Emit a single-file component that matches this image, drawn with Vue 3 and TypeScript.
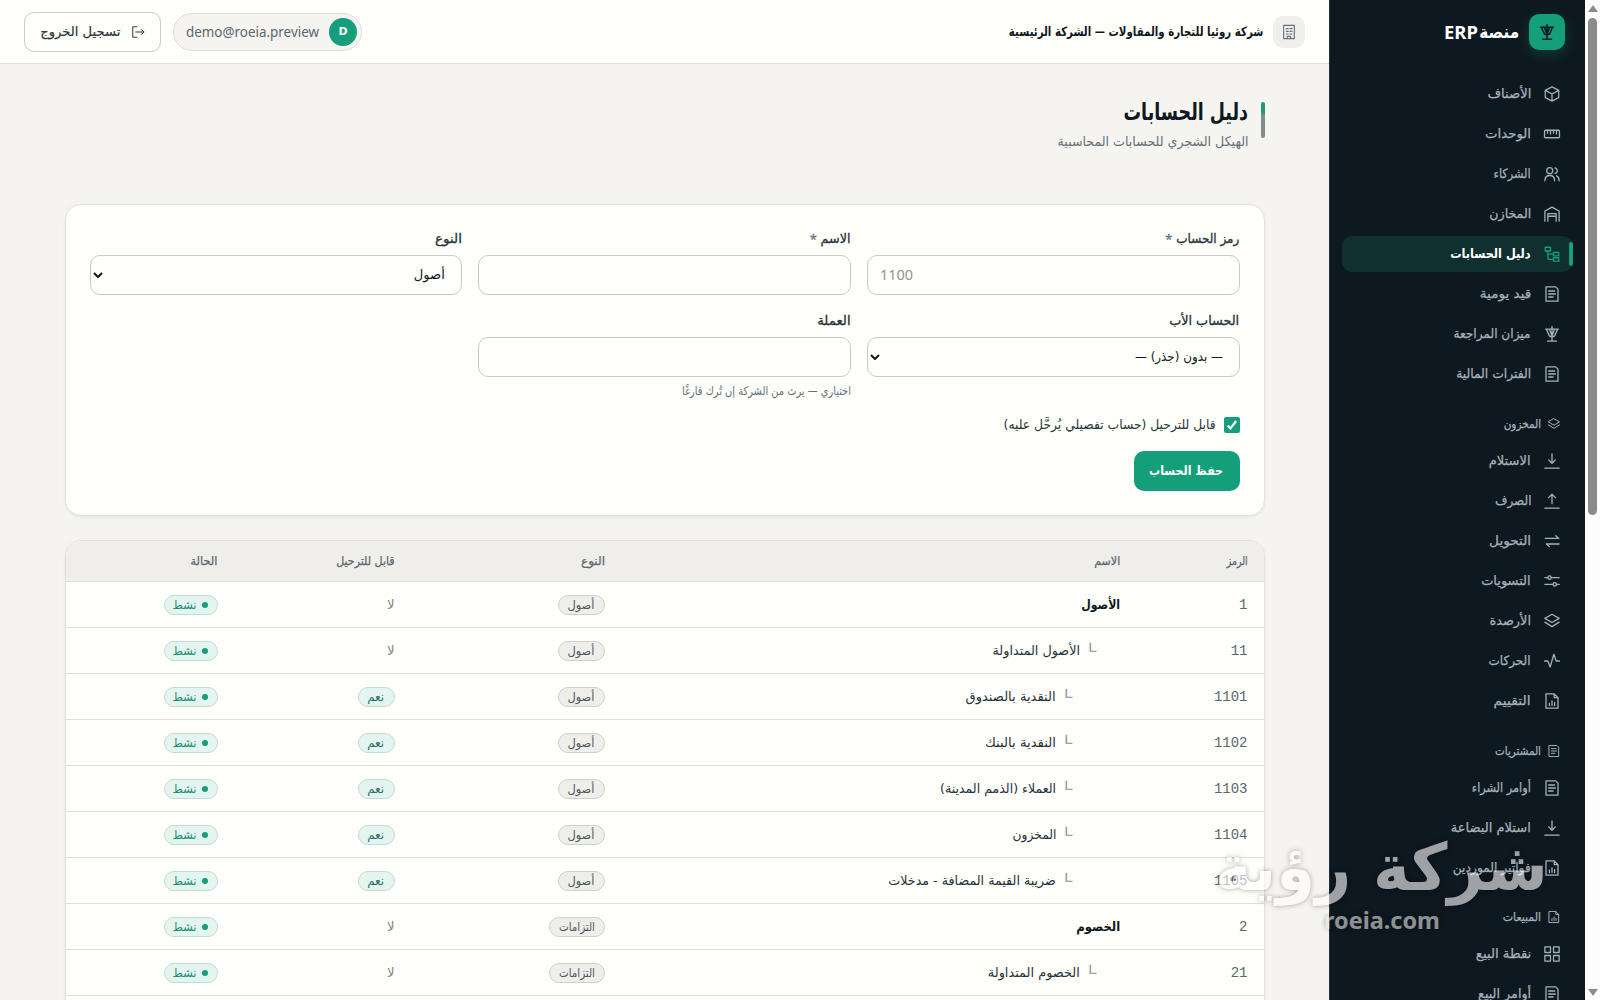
<script setup lang="ts">
import type { Directive } from 'vue'

interface NavItem { label: string; w: number; icon: string; active?: boolean }
interface NavGroup { title?: string; w?: number; icon?: string; items: NavItem[] }
interface Account { code: string; name: string; w: number; level: number; type: string; tw: number; postable: boolean }

// Sets the width of a run of text, so that labels keep their measure in any fallback font.
const vFit: Directive<HTMLElement, number> = {
  mounted(el, { value }) {
    const natural = el.getBoundingClientRect().width
    if (!natural) return
    const ltr = getComputedStyle(el).direction === 'ltr'
    el.style.transformOrigin = ltr ? 'left center' : 'right center'
    el.style.transform = `scaleX(${value / natural})`
    el.style.marginInlineEnd = `${value - natural}px`
  },
}

const icons: Record<string, string> = {
  box: 'M12 2.5l9 4.7v9.6l-9 4.7-9-4.7V7.2zM3 7.2l9 4.8 9-4.8M12 12v9.5',
  ruler: 'M3.5 7h17a1.5 1.5 0 0 1 1.5 1.5v7a1.5 1.5 0 0 1-1.5 1.5h-17A1.5 1.5 0 0 1 2 15.5v-7A1.5 1.5 0 0 1 3.5 7zM6 7v4M10 7v5M14 7v4M18 7v5',
  users: 'M9 3.5a4 4 0 1 1 0 8 4 4 0 0 1 0-8zM2.5 21c0-4.5 2.8-7 6.5-7s6.5 2.5 6.5 7M16 3.8a3.8 3.8 0 0 1 0 7.4M18 14.5c2.3 1 3.5 3.3 3.5 6.5',
  store: 'M2.5 21.5V8L12 2.8 21.5 8v13.5M6.5 21.5V11.5h11v10M6.5 15h11',
  tree: 'M3 3h7v5H3zM14 10h7v4.5h-7zM14 17h7v4.5h-7zM6.5 8v9.5a1.7 1.7 0 0 0 1.7 1.7H14M6.5 12.2H14',
  doc: 'M4 2.5h13l3 3v16H4zM7.5 8h8M7.5 12h9M7.5 16h6',
  scale: 'M12 2v19.5M6 21.5h12M3.5 5.5h17M4.5 5.5l4 9c2 1.5 5 1.5 7 0l4-9M8.5 5.5L12 15l3.5-9.5',
  layers: 'M12 3l9.5 5.5L12 14 2.5 8.5zM2.5 13.5L12 19.5l9.5-6',
  down: 'M12 2.5v12M7.5 10.5l4.5 4.5 4.5-4.5M2.5 21.5h19',
  up: 'M12 15.5v-12M7.5 7.5L12 3l4.5 4.5M2.5 21.5h19',
  swap: 'M3 8.5h18M17 5l4 3.5M21.5 16h-17M8.5 19.5l-4-3.5',
  sliders: 'M2.5 7.5h4M11 7.5h10.5M8.7 5.3a2.2 2.2 0 1 1 0 4.4 2.2 2.2 0 0 1 0-4.4M2.5 16.5h11M18 16.5h3.5M15.7 14.3a2.2 2.2 0 1 1 0 4.4 2.2 2.2 0 0 1 0-4.4',
  pulse: 'M2 12h4.500l3 8 5-17 3 9H22',
  report: 'M4 2.5h11l5 5v14H4zM15 2.5v5h5M8.5 18v-3M12 18v-6M15.5 18v-4',
  grid: 'M2.5 2.5h7.5v7.5H2.5zM14 2.5h7.5v7.5H14zM2.5 14h7.5v7.5H2.5zM14 14h7.5v7.5H14z',
  building: 'M4 2h16v20H4zM8 7h3M13.5 7h3M8 11h3M13.5 11h3M8 15h3M13.5 15h3M9.5 22v-3.5h5V22',
  exit: 'M10 3H3v18h7M8 12h14M18 8l4 4-4 4',
}

const nav: NavGroup[] = [
  { items: [
    { label: 'الأصناف', w: 44, icon: 'box' },
    { label: 'الوحدات', w: 46, icon: 'ruler' },
    { label: 'الشركاء', w: 37, icon: 'users' },
    { label: 'المخازن', w: 42, icon: 'store' },
    { label: 'دليل الحسابات', w: 80.5, icon: 'tree', active: true },
    { label: 'قيد يومية', w: 51.5, icon: 'doc' },
    { label: 'ميزان المراجعة', w: 77, icon: 'scale' },
    { label: 'الفترات المالية', w: 75, icon: 'doc' },
  ] },
  { title: 'المخزون', w: 37.5, icon: 'layers', items: [
    { label: 'الاستلام', w: 42, icon: 'down' },
    { label: 'الصرف', w: 36.5, icon: 'up' },
    { label: 'التحويل', w: 42, icon: 'swap' },
    { label: 'التسويات', w: 49.5, icon: 'sliders' },
    { label: 'الأرصدة', w: 41.5, icon: 'layers' },
    { label: 'الحركات', w: 42, icon: 'pulse' },
    { label: 'التقييم', w: 37, icon: 'report' },
  ] },
  { title: 'المشتريات', w: 46, icon: 'doc', items: [
    { label: 'أوامر الشراء', w: 59, icon: 'doc' },
    { label: 'استلام البضاعة', w: 80, icon: 'down' },
    { label: 'فواتير الموردين', w: 78, icon: 'report' },
  ] },
  { title: 'المبيعات', w: 38.5, icon: 'report', items: [
    { label: 'نقطة البيع', w: 55.5, icon: 'grid' },
    { label: 'أوامر البيع', w: 53, icon: 'doc' },
  ] },
]

const accounts: Account[] = [
  { code: '1', name: 'الأصول', w: 39, level: 0, type: 'أصول', tw: 27, postable: false },
  { code: '11', name: 'الأصول المتداولة', w: 87.5, level: 1, type: 'أصول', tw: 27, postable: false },
  { code: '1101', name: 'النقدية بالصندوق', w: 90, level: 2, type: 'أصول', tw: 27, postable: true },
  { code: '1102', name: 'النقدية بالبنك', w: 71, level: 2, type: 'أصول', tw: 27, postable: true },
  { code: '1103', name: 'العملاء (الذمم المدينة)', w: 116, level: 2, type: 'أصول', tw: 27, postable: true },
  { code: '1104', name: 'المخزون', w: 44, level: 2, type: 'أصول', tw: 27, postable: true },
  { code: '1105', name: 'ضريبة القيمة المضافة - مدخلات', w: 167.5, level: 2, type: 'أصول', tw: 27, postable: true },
  { code: '2', name: 'الخصوم', w: 44, level: 0, type: 'التزامات', tw: 36, postable: false },
  { code: '21', name: 'الخصوم المتداولة', w: 92, level: 1, type: 'التزامات', tw: 36, postable: false },
]
</script>

<template>
  <div class="screen" dir="rtl">
    <div class="scrollbar">
      <i class="arrow arrow-up"></i>
      <i class="thumb"></i>
      <i class="arrow arrow-down"></i>
    </div>

    <aside class="sidebar">
      <div class="brand">
        <span class="logo">
          <svg viewBox="0 0 24 24" width="18" height="18"><path :d="icons.scale" /></svg>
        </span>
        <span class="brand-name"><span v-fit="40" class="t">منصة</span><span v-fit="34" class="t latin" dir="ltr">ERP</span></span>
      </div>
      <nav>
        <template v-for="(group, g) in nav" :key="g">
          <div v-if="group.title" class="group">
            <svg viewBox="0 0 24 24" width="14" height="14"><path :d="icons[group.icon!]" /></svg>
            <span v-fit="group.w!" class="t">{{ group.title }}</span>
          </div>
          <ul>
            <li v-for="item in group.items" :key="item.label" :class="{ active: item.active }">
              <svg viewBox="0 0 24 24" width="18" height="18"><path :d="icons[item.icon]" /></svg>
              <span v-fit="item.w" class="t">{{ item.label }}</span>
            </li>
          </ul>
        </template>
      </nav>
    </aside>

    <main>
      <header class="topbar">
        <div class="company">
          <span class="company-icon"><svg viewBox="0 0 24 24" width="16" height="16"><path :d="icons.building" /></svg></span>
          <span v-fit="254.5" class="t">شركة روئيا للتجارة والمقاولات — الشركة الرئيسية</span>
        </div>
        <div class="account">
          <div class="user">
            <span class="avatar">D</span>
            <span v-fit="133" class="t latin email" dir="ltr">demo@roeia.preview</span>
          </div>
          <button class="logout">
            <svg viewBox="0 0 24 24" width="14" height="14"><path :d="icons.exit" /></svg>
            <span v-fit="80" class="t">تسجيل الخروج</span>
          </button>
        </div>
      </header>

      <div class="content">
        <div class="heading">
          <i class="heading-bar"></i>
          <div>
            <h1><span v-fit="124.5" class="t">دليل الحسابات</span></h1>
            <p><span v-fit="191" class="t">الهيكل الشجري للحسابات المحاسبية</span></p>
          </div>
        </div>

        <section class="card form">
          <div class="fields">
            <div class="field">
              <label><span v-fit="63" class="t">رمز الحساب</span><span class="star">*</span></label>
              <div class="control ltr"><span v-fit="33" class="t latin" dir="ltr">1100</span></div>
            </div>
            <div class="field">
              <label><span v-fit="30" class="t">الاسم</span><span class="star">*</span></label>
              <div class="control"></div>
            </div>
            <div class="field">
              <label><span v-fit="27" class="t">النوع</span></label>
              <div class="control select">
                <span v-fit="31" class="t">أصول</span>
                <svg viewBox="0 0 10 7" width="10" height="7"><path d="M1 1l4 4 4-4" /></svg>
              </div>
            </div>
            <div class="field">
              <label><span v-fit="70" class="t">الحساب الأب</span></label>
              <div class="control select">
                <span v-fit="88" class="t">— بدون (جذر) —</span>
                <svg viewBox="0 0 10 7" width="10" height="7"><path d="M1 1l4 4 4-4" /></svg>
              </div>
            </div>
            <div class="field">
              <label><span v-fit="33.5" class="t">العملة</span></label>
              <div class="control"></div>
              <div class="hint"><span v-fit="169" class="t">اختياري — يرث من الشركة إن تُرك فارغًا</span></div>
            </div>
          </div>
          <div class="check">
            <span class="box"><svg viewBox="0 0 16 16" width="16" height="16"><path d="M3.8 8.6l2.7 2.8 5.6-7.4" /></svg></span>
            <span v-fit="212" class="t">قابل للترحيل (حساب تفصيلي يُرحَّل عليه)</span>
          </div>
          <button class="save"><span v-fit="74" class="t">حفظ الحساب</span></button>
        </section>

        <section class="card table">
          <div class="row head">
            <div><span v-fit="21" class="t">الرمز</span></div>
            <div><span v-fit="26" class="t">الاسم</span></div>
            <div><span v-fit="24" class="t">النوع</span></div>
            <div><span v-fit="58.5" class="t">قابل للترحيل</span></div>
            <div><span v-fit="27" class="t">الحالة</span></div>
          </div>
          <div v-for="a in accounts" :key="a.code" class="row">
            <div class="code">{{ a.code }}</div>
            <div class="name" :class="'level-' + a.level">
              <span v-if="a.level" class="branch">└</span>
              <span v-fit="a.w" class="t">{{ a.name }}</span>
            </div>
            <div><span class="badge neutral"><span v-fit="a.tw" class="t">{{ a.type }}</span></span></div>
            <div>
              <span v-if="a.postable" class="badge ok"><span v-fit="17" class="t">نعم</span></span>
              <span v-else v-fit="7.5" class="t no">لا</span>
            </div>
            <div><span class="badge live"><i class="dot"></i><span v-fit="24" class="t">نشط</span></span></div>
          </div>
        </section>
      </div>
    </main>

    <div class="watermark">
      <span v-fit="333" class="t wm-name">شركة رؤية</span>
      <span v-fit="116" class="t wm-site" dir="ltr">roeia.com</span>
    </div>
  </div>
</template>

<style>
body {
  margin: 0;
  overflow: hidden;
}
</style>

<style scoped>
* {
  box-sizing: border-box;
}
.screen {
  position: relative;
  display: flex;
  width: 1600px;
  height: 1000px;
  overflow: hidden;
  background: #f5f4f1;
  color: #0e1820;
  font-family: "DejaVu Sans", sans-serif;
  font-size: 13px;
  line-height: 20px;
}
.t {
  display: inline-block;
  white-space: nowrap;
  flex: none;
}
.latin {
  font-family: "Noto Sans", sans-serif;
}
svg {
  display: block;
  flex: none;
  fill: none;
  stroke: currentColor;
  stroke-width: 1.7;
  stroke-linecap: round;
  stroke-linejoin: round;
}
button {
  font: inherit;
  cursor: pointer;
}

.scrollbar {
  width: 15px;
  flex: none;
  display: flex;
  flex-direction: column;
  align-items: center;
  padding: 5px 0 4px;
  background: #fdfdfb;
}
.thumb {
  width: 9px;
  height: 497px;
  margin-top: 6px;
  border-radius: 5px;
  background: #8b8b8b;
}
.arrow {
  border: 5px solid transparent;
}
.arrow-up {
  border-top: 0;
  border-bottom: 7px solid #8b8b8b;
}
.arrow-down {
  margin-top: auto;
  border-bottom: 0;
  border-top: 7px solid #8b8b8b;
}

.sidebar {
  width: 256px;
  flex: none;
  padding: 14px 12px 0;
  border-left: 1px solid #24303a;
  background: #0e1820;
  color: #a5b1b8;
}
.sidebar nav {
  -webkit-text-stroke: 0.25px currentColor;
}
.brand {
  display: flex;
  align-items: center;
  gap: 10px;
  height: 36px;
  padding-right: 8px;
  margin-bottom: 26px;
}
.logo {
  display: grid;
  place-items: center;
  width: 36px;
  height: 36px;
  border-radius: 10px;
  background: #159e7a;
  color: #0e1820;
  box-shadow: 0 4px 14px rgba(21, 158, 122, 0.28);
}
.logo svg {
  stroke-width: 2;
}
.brand-name {
  display: flex;
  align-items: center;
  gap: 1px;
  color: #fff;
  font-size: 18px;
  font-weight: 700;
}
ul {
  display: flex;
  flex-direction: column;
  gap: 4px;
  margin: 0;
  padding: 0;
  list-style: none;
}
li {
  position: relative;
  display: flex;
  align-items: center;
  gap: 12px;
  height: 36px;
  padding: 0 12px;
  border-radius: 10px;
}
li.active {
  background: #103030;
  color: #fff;
  font-weight: 700;
  -webkit-text-stroke: 0;
}
li.active svg {
  color: #159e7a;
}
li.active::before {
  content: "";
  position: absolute;
  right: 0;
  top: 6px;
  width: 4px;
  height: 24px;
  border-radius: 3px;
  background: #159e7a;
}
.group {
  display: flex;
  align-items: center;
  gap: 6px;
  height: 38px;
  margin-top: 12.8px;
  padding-right: 12px;
  font-size: 11.5px;
}

main {
  flex: 1;
  min-width: 0;
}
.topbar {
  display: flex;
  align-items: center;
  justify-content: space-between;
  height: 64px;
  padding: 0 24px;
  border-bottom: 1px solid #dededb;
  background: #fefefb;
}
.company,
.account,
.user,
.logout {
  display: flex;
  align-items: center;
}
.company {
  gap: 10px;
  font-weight: 700;
}
.company-icon {
  display: grid;
  place-items: center;
  width: 32px;
  height: 32px;
  border-radius: 10px;
  background: #f0efec;
  color: #66727a;
}
.account {
  gap: 12px;
}
.user {
  gap: 10px;
  width: 189px;
  height: 38px;
  padding-right: 4px;
  border: 1px solid #dededb;
  border-radius: 19px;
  background: #f5f4f1;
}
.avatar {
  width: 28px;
  height: 28px;
  border-radius: 50%;
  background: #159e7a;
  color: #fff;
  font-size: 11px;
  font-weight: 700;
  line-height: 28px;
  text-align: center;
}
.email {
  color: #5b676e;
  font-size: 14px;
}
.logout {
  justify-content: center;
  gap: 10px;
  width: 137px;
  height: 40px;
  padding: 0;
  border: 1px solid #cbcbc8;
  border-radius: 10px;
  background: #fefefb;
  color: #2b363d;
  -webkit-text-stroke: 0.2px currentColor;
}

.content {
  width: 1200px;
  margin: 0 auto;
  padding-top: 36px;
}
.heading {
  display: flex;
  gap: 12px;
  height: 104px;
}
.heading-bar {
  width: 4px;
  height: 36px;
  margin-top: 2px;
  border-radius: 2px;
  background: linear-gradient(#26957a 0 10px, #858a8b 14px);
}
h1 {
  margin: 0;
  font-size: 24px;
  font-weight: 700;
  line-height: 24px;
}
p {
  margin: 7px 0 0;
  color: #66727a;
  font-size: 13.5px;
}
.card {
  border: 1px solid #e2e2df;
  border-radius: 16px;
  background: #fefefb;
  box-shadow: 0 1px 3px rgba(14, 24, 32, 0.08);
}
.form {
  height: 312px;
  padding: 24px;
}
.fields {
  display: grid;
  grid-template-columns: repeat(3, 1fr);
  gap: 16px;
}
label {
  display: flex;
  gap: 4px;
  height: 20px;
  margin-bottom: 6px;
  color: #26323a;
  -webkit-text-stroke: 0.3px currentColor;
}
.star {
  color: #66727a;
  font-family: "Noto Sans", sans-serif;
}
.control {
  display: flex;
  align-items: center;
  height: 40px;
  padding: 0 12px;
  border: 1px solid #c9cac7;
  border-radius: 10px;
}
.control.ltr {
  flex-direction: row-reverse;
  color: #8c9498;
  font-size: 14px;
}
.select {
  justify-content: space-between;
  padding: 0 16px 0 2px;
}
.select svg {
  stroke-width: 2;
  stroke-linecap: butt;
}
.hint {
  margin-top: 4px;
  color: #66727a;
  font-size: 12px;
}
.check {
  display: flex;
  align-items: center;
  gap: 8px;
  margin-top: 14px;
  color: #2b363d;
}
.box {
  width: 16px;
  height: 16px;
  border-radius: 2px;
  background: #159e7a;
  color: #fff;
}
.box svg {
  stroke-width: 2.2;
  stroke-linecap: butt;
  stroke-linejoin: miter;
}
.save {
  display: block;
  width: 106px;
  height: 40px;
  margin-top: 16px;
  padding: 0 16px;
  border: 0;
  border-radius: 10px;
  background: #159e7a;
  color: #fff;
  font-weight: 700;
  text-align: right;
}

.table {
  height: 600px;
  margin-top: 24px;
  overflow: hidden;
}
.row {
  display: grid;
  grid-template-columns: 127.5px 515.5px 210px 177px 1fr;
  align-items: center;
  height: 46px;
  border-bottom: 1px solid #dededb;
}
.row > div {
  display: flex;
  align-items: center;
  padding-right: 16px;
}
.head {
  height: 41px;
  background: #efeeeb;
  color: #5b676e;
  font-size: 12px;
  -webkit-text-stroke: 0.25px currentColor;
}
.code {
  color: #5b676e;
  font-family: "Liberation Mono", monospace;
  font-size: 14px;
}
.name {
  color: #26323a;
}
.name.level-0 {
  color: #0e1820;
  font-weight: 700;
}
.row > .name.level-1 {
  padding-right: 40px;
}
.row > .name.level-2 {
  padding-right: 64px;
}
.branch {
  width: 7px;
  margin-left: 9px;
  color: #9aa1a4;
  font-family: "DejaVu Sans Mono", monospace;
  font-size: 12px;
  line-height: 14px;
  transform: translateX(-2px) scale(1.65, 1.2);
}
.badge {
  display: inline-flex;
  align-items: center;
  height: 20px;
  padding: 0 9px;
  border: 1px solid #cfd0cd;
  border-radius: 10px;
  font-size: 12px;
  line-height: 16px;
}
.neutral {
  background: #efeeeb;
  color: #4c585f;
}
.ok,
.live {
  border-color: #bfdcd4;
  background: #e4f4f0;
  color: #2c6f60;
}
.live {
  gap: 5px;
  padding-left: 8px;
  color: #1c8f71;
}
.dot {
  width: 6px;
  height: 6px;
  border-radius: 50%;
  background: #159e7a;
}
.no {
  color: #7d878c;
}

.watermark {
  position: absolute;
  right: 52px;
  top: 826px;
  width: 330px;
  display: flex;
  flex-direction: column;
  align-items: flex-start;
  color: #fff;
  font-weight: 700;
  opacity: 0.6;
  text-shadow: 0 0 5px rgba(0, 0, 0, 0.55);
}
.wm-name {
  font-size: 65px;
  line-height: 84px;
}
.wm-site {
  align-self: flex-end;
  margin-left: 106px;
  color: #e2e2e2;
  font-family: "Noto Sans", sans-serif;
  font-size: 23px;
  line-height: 20px;
}
</style>
